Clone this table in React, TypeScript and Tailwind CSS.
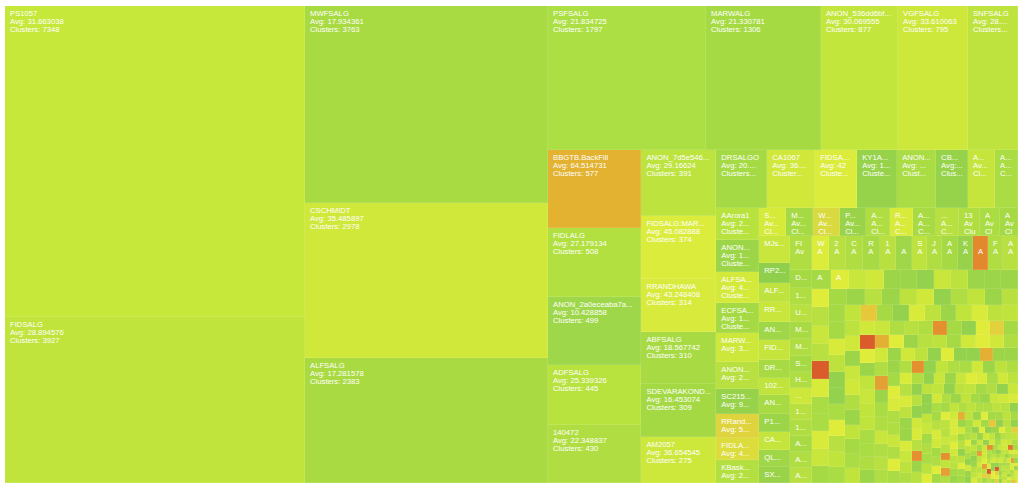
import React from "react";

type Tile = { g: number; c: string; l: string[] };
type Group = { g: number; d: "row" | "col"; k: Item[] };
type Mosaic = { g: number; m: true };
type Item = Tile | Group | Mosaic;

const L = (g: number, c: string, ...l: string[]): Tile => ({ g, c, l });
const R = (g: number, ...k: Item[]): Group => ({ g, d: "row", k });
const C = (g: number, ...k: Item[]): Group => ({ g, d: "col", k });

// deterministic random so the mosaic stays the same between renders
function rng(seed: number) {
  return () => {
    seed = (seed + 0x6d2b79f5) | 0;
    let t = Math.imul(seed ^ (seed >>> 15), 1 | seed);
    t = (t + Math.imul(t ^ (t >>> 7), 61 | t)) ^ t;
    return ((t ^ (t >>> 14)) >>> 0) / 4294967296;
  };
}

const greens = ["#a6da44", "#b0de42", "#b8e040", "#c0e43c", "#c8e63c", "#d0e83a", "#d8ea3a", "#9cd548", "#94d14c", "#e0ec3a", "#aadc44", "#bde23e"];
const hot = ["#e2d03c", "#e6c83a", "#e4b034", "#e4a032", "#e4902e", "#e07a2a", "#d95c2a"];

const rand = rng(11);
const N = 380;
const mosaicValues = Array.from({ length: N }, (_, i) => 1 + 23 * Math.pow(1 - i / N, 2) * (0.8 + 0.4 * rand())).sort((a, b) => b - a);
const mosaicColors = mosaicValues.map((_, i) => {
  const p = 0.02 + 0.13 * Math.pow(i / N, 1.3);
  if (rand() < p) return hot[Math.floor(rand() * hot.length)];
  return greens[Math.floor(rand() * greens.length)];
});

type Sq = { vertical: boolean; start: number; end: number; rest: Sq | null };

function squarify(vals: number[], start: number, w: number, h: number): Sq | null {
  if (start >= vals.length) return null;
  let total = 0;
  for (let i = start; i < vals.length; i++) total += vals[i];
  const scale = (w * h) / total;
  const side = Math.min(w, h);
  let sum = 0, mn = Infinity, mx = 0, best = Infinity, end = start;
  while (end < vals.length) {
    const v = vals[end] * scale;
    const s2 = sum + v;
    const mn2 = Math.min(mn, v);
    const mx2 = Math.max(mx, v);
    const r = Math.max((side * side * mx2) / (s2 * s2), (s2 * s2) / (side * side * mn2));
    if (end > start && r > best) break;
    sum = s2; mn = mn2; mx = mx2; best = r; end++;
  }
  const vertical = w >= h;
  const thick = sum / side;
  const rest = vertical ? squarify(vals, end, w - thick, h) : squarify(vals, end, w, h - thick);
  return { vertical, start, end, rest };
}

const mosaicTree = squarify(mosaicValues, 0, 206, 213);
const mosaicLabels: Record<number, string> = { 0: "A", 1: "A" };

function sumRange(a: number, b: number) {
  let s = 0;
  for (let i = a; i < b; i++) s += mosaicValues[i];
  return s;
}

function SqView({ s, grow }: { s: Sq; grow: number }) {
  return (
    <div className={s.vertical ? "flex flex-row basis-0 min-w-0 min-h-0" : "flex flex-col basis-0 min-w-0 min-h-0"} style={{ flexGrow: grow }}>
      <div className={s.vertical ? "flex flex-col basis-0 min-w-0 min-h-0" : "flex flex-row basis-0 min-w-0 min-h-0"} style={{ flexGrow: sumRange(s.start, s.end) }}>
        {mosaicValues.slice(s.start, s.end).map((v, j) => {
          const i = s.start + j;
          return (
            <div key={i} className="basis-0 min-w-0 min-h-0 overflow-hidden shadow-[inset_-1px_-1px_0_rgba(255,255,255,0.1)]" style={{ flexGrow: v, backgroundColor: mosaicColors[i] }}>
              {mosaicLabels[i] && (
                <div className="pl-[5px] pt-[4px] text-white whitespace-nowrap">{mosaicLabels[i]}</div>
              )}
            </div>
          );
        })}
      </div>
      {s.rest && <SqView s={s.rest} grow={sumRange(s.end, mosaicValues.length)} />}
    </div>
  );
}

const mosaic: Mosaic = { g: 206, m: true };

const tree: Group = R(1,
  C(300,
    L(7348, "#c6e83a", "PS1057", "Avg: 31.663038", "Clusters: 7348"),
    L(3927, "#c0e43c", "FIDSALG", "Avg: 28.894576", "Clusters: 3927")),
  C(243,
    L(3763, "#a8da42", "MWFSALG", "Avg: 17.934361", "Clusters: 3763"),
    L(2978, "#cfe83a", "CSCHMIDT", "Avg: 35.485897", "Clusters: 2978"),
    L(2383, "#a9da42", "ALFSALG", "Avg: 17.281578", "Clusters: 2383")),
  C(470,
    R(144,
      L(1797, "#acdf44", "PSFSALG", "Avg: 21.834725", "Clusters: 1797"),
      L(1306, "#a6da42", "MARWALG", "Avg: 21.330781", "Clusters: 1306"),
      L(877, "#c3e63c", "ANON_536dd6bf...", "Avg: 30.069555", "Clusters: 877"),
      L(795, "#cde83a", "VGFSALG", "Avg: 33.610063", "Clusters: 795"),
      L(569, "#bfe33e", "SNFSALG", "Avg: 28....", "Clusters...")),
    R(333,
      C(2459,
        L(577, "#e2b230", "BBGTB.BackFill", "Avg: 64.514731", "Clusters: 577"),
        L(508, "#b2e040", "FIDLALG", "Avg: 27.179134", "Clusters: 508"),
        L(499, "#9fd74a", "ANON_2a0eceaba7a...", "Avg: 10.428858", "Clusters: 499"),
        L(445, "#b8e23e", "ADFSALG", "Avg: 25.339326", "Clusters: 445"),
        L(430, "#b0de42", "140472", "Avg: 22.348837", "Clusters: 430")),
      C(1973,
        L(391, "#bde33e", "ANON_7d5e546...", "Avg: 29.16624", "Clusters: 391"),
        L(374, "#dcec3c", "FIDSALG:MAR...", "Avg: 45.082888", "Clusters: 374"),
        L(314, "#d8ea3c", "RRANDHAWA", "Avg: 43.248408", "Clusters: 314"),
        L(310, "#a8da44", "ABFSALG", "Avg: 18.567742", "Clusters: 310"),
        L(309, "#a4d944", "SDEVARAKOND...", "Avg: 16.453074", "Clusters: 309"),
        L(275, "#cde83a", "AM2057", "Avg: 36.654545", "Clusters: 275")),
      C(7944,
        R(58,
          L(51, "#a6da44", "DRSALGO", "Avg: 20....", "Clusters..."),
          L(48, "#cfe83a", "CA1067", "Avg: 36....", "Cluster..."),
          L(42, "#dcec3c", "FIDSA...", "Avg: 42", "Cluste..."),
          L(40, "#96d24a", "KY1A...", "Avg: 1...", "Cluste..."),
          L(39, "#aadc44", "ANON...", "Avg: ...", "Clust..."),
          L(32, "#96d24a", "CB...", "Avg:...", "Clus..."),
          L(27, "#c6e53c", "A...", "Av...", "Cl..."),
          L(23, "#aadc44", "A...", "A...", "C...")),
        R(275,
          C(43,
            L(32, "#b8e23e", "AArora1", "Avg: 2...", "Cluste..."),
            L(32, "#9dd548", "ANON...", "Avg: 1...", "Cluste..."),
            L(31, "#d3ea3a", "ALFSA...", "Avg: 4...", "Cluste..."),
            L(30, "#a6da44", "ECFSA...", "Avg: 1...", "Cluste..."),
            L(29, "#cde83a", "MARW...", "Avg: 3..."),
            L(27, "#b8e040", "ANON...", "Avg: 2..."),
            L(25, "#98d24a", "SC215...", "Avg: 9..."),
            L(24, "#e0d43e", "RRand...", "Avg: 5..."),
            L(22, "#dcdc3c", "FIDLA...", "Avg: 4..."),
            L(23, "#b4df40", "KBask...", "Avg: 2...")),
          C(259,
            R(28,
              L(27, "#d6ea3a", "S...", "Av...", "Cl..."),
              L(27, "#a6da44", "M...", "Av...", "Cl..."),
              L(27, "#d8da40", "W...", "Av...", "Cl..."),
              L(26, "#9ad34a", "P...", "Av...", "Cl..."),
              L(24, "#b0de42", "A...", "A...", "Cl..."),
              L(23, "#d8ea3a", "R...", "A...", "C..."),
              L(23, "#a8da44", "A...", "A...", "C..."),
              L(23, "#b8e040", "...", "A...", "C..."),
              L(21, "#b0de42", "13", "Av", "Clu"),
              L(20, "#aadc44", "A", "Av", "Cl"),
              L(18, "#a6da44", "A", "Av", "Cl")),
            R(247,
              C(31,
                L(27, "#c8e63c", "MJs..."),
                L(20, "#8fcf4c", "RP2..."),
                L(19, "#bfe33e", "ALF..."),
                L(20, "#c9e63c", "RR..."),
                L(18, "#a0d748", "AN..."),
                L(20, "#c6e53c", "FID..."),
                L(18, "#a8da44", "DR..."),
                L(17, "#c0e43c", "102..."),
                L(19, "#a8da44", "AN..."),
                L(18, "#9cd548", "P1..."),
                L(18, "#c6e53c", "CA..."),
                L(17, "#a0d748", "QL..."),
                L(16, "#9ad34a", "SX...")),
              C(228,
                R(34,
                  L(22, "#b0de42", "FI", "Av"),
                  L(17, "#dcec3a", "W", "A"),
                  L(17, "#b8e040", "2", "A"),
                  L(17, "#b0de42", "C", "A"),
                  L(17, "#a8da44", "R", "A"),
                  L(16, "#b8e040", "1", "A"),
                  L(16, "#a0d748", "", "A"),
                  L(15, "#bfe33e", "S", "A"),
                  L(15, "#b0de42", "J", "A"),
                  L(16, "#a6da44", "A", "A"),
                  L(15, "#97d24a", "K", "A"),
                  L(15, "#e3882c", "", "A"),
                  L(15, "#b0de42", "F", "A"),
                  L(15, "#b8e040", "A", "A")),
                R(213,
                  C(22,
                    L(18, "#a6da44", "D..."),
                    L(17, "#b0de42", "1..."),
                    L(17, "#b8e040", "U..."),
                    L(17, "#a8da44", "M..."),
                    L(17, "#b0de42", "M..."),
                    L(16, "#a6da44", "S..."),
                    L(16, "#b0de42", "H..."),
                    L(16, "#cde83a", "..."),
                    L(16, "#b8e040", "1..."),
                    L(16, "#b0de42", "1..."),
                    L(16, "#a8da44", "A..."),
                    L(16, "#b0de42", "A..."),
                    L(15, "#b8e040", "A...")),
                  mosaic)))))))));

function Node({ n }: { n: Item }) {
  if ("m" in n) {
    return mosaicTree ? <SqView s={mosaicTree} grow={n.g} /> : null;
  }
  if ("k" in n) {
    return (
      <div className={n.d === "row" ? "flex flex-row basis-0 min-w-0 min-h-0" : "flex flex-col basis-0 min-w-0 min-h-0"} style={{ flexGrow: n.g }}>
        {n.k.map((child, i) => (
          <Node key={i} n={child} />
        ))}
      </div>
    );
  }
  return (
    <div className="basis-0 min-w-0 min-h-0 overflow-hidden shadow-[inset_-1px_-1px_0_rgba(255,255,255,0.12)]" style={{ flexGrow: n.g, backgroundColor: n.c }}>
      <div className="pl-[5px] pt-[4px] pr-[1px] text-white">
        {n.l.map((t, i) => (
          <div key={i} className="whitespace-nowrap">
            {t || "\u00a0"}
          </div>
        ))}
      </div>
    </div>
  );
}

export default function App() {
  return (
    <div className="w-[1024px] h-[489px] bg-white pt-[6px] pl-[5px] font-['Liberation_Sans',Arial,sans-serif] text-[7.7px] leading-[8px]">
      <div className="flex flex-row w-[1013px] h-[477px]">
        {tree.k.map((child, i) => (
          <Node key={i} n={child} />
        ))}
      </div>
    </div>
  );
}
